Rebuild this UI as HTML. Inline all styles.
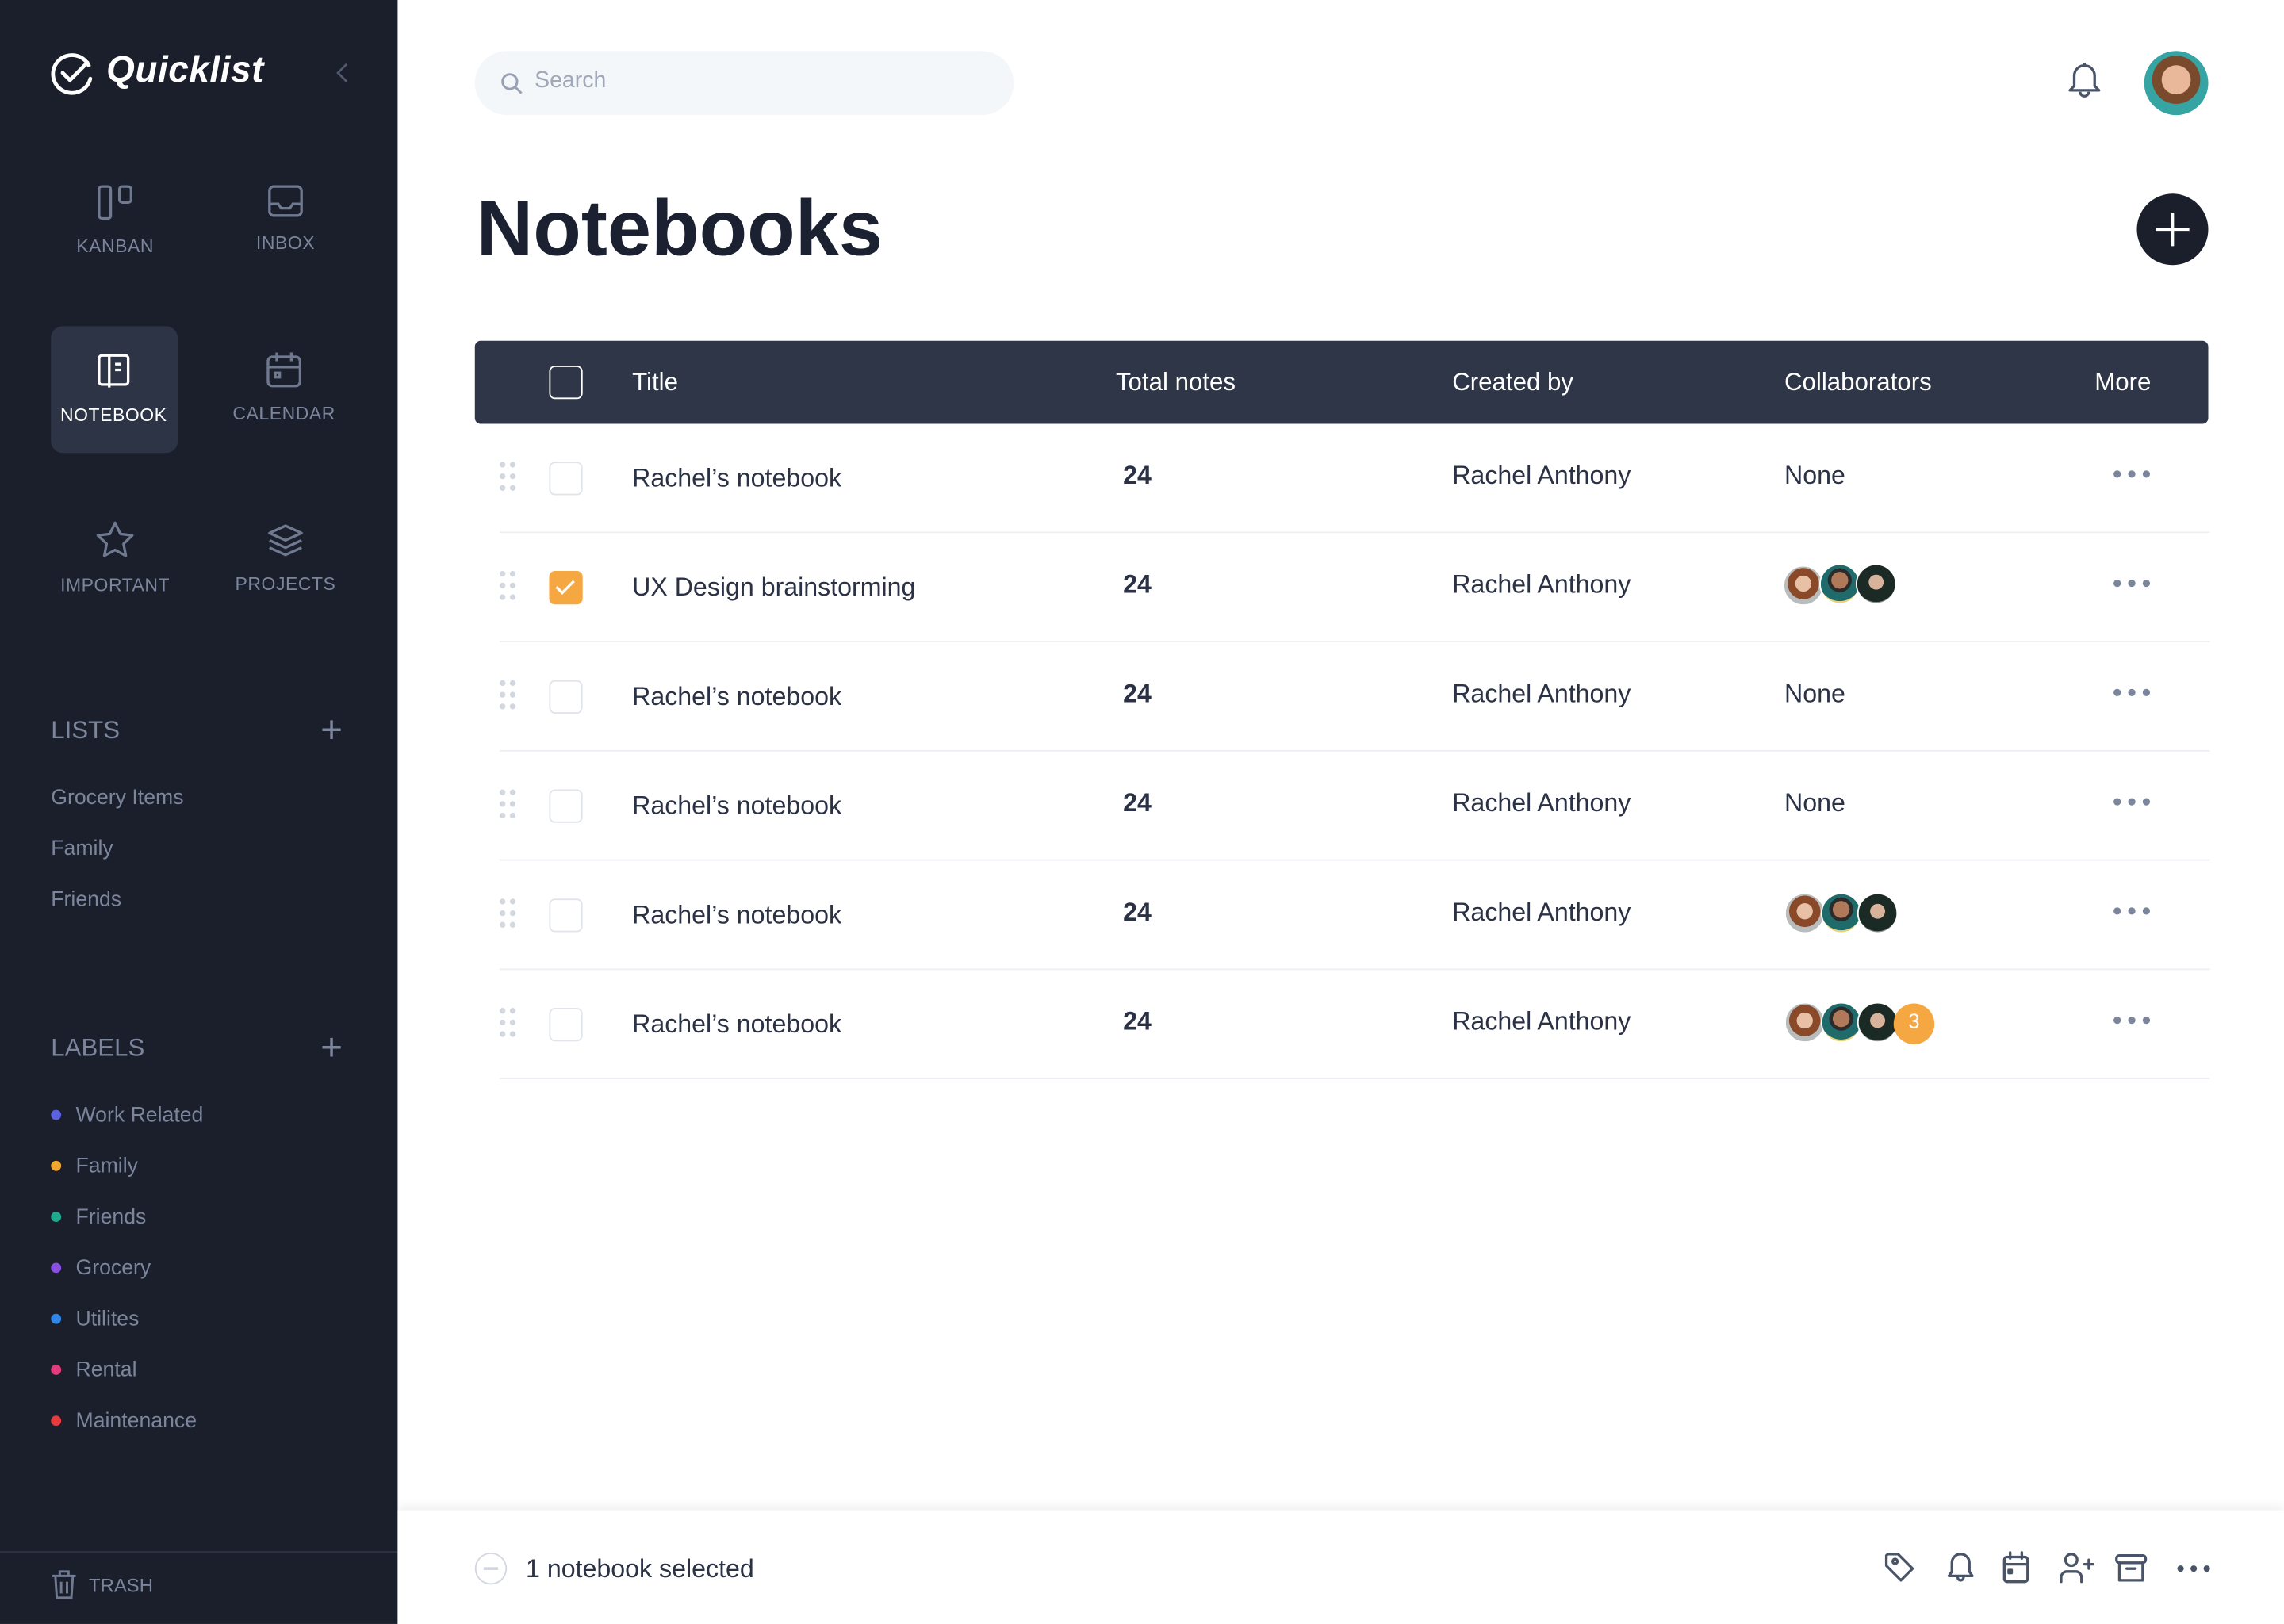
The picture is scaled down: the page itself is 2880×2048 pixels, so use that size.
<!DOCTYPE html>
<html><head><meta charset="utf-8"><style>
*{margin:0;padding:0;box-sizing:border-box}
html,body{width:2880px;height:2048px;overflow:hidden;background:#fff}
#s{width:1568px;height:1115px;transform:scale(1.836735);transform-origin:0 0;position:relative;font-family:"Liberation Sans",sans-serif;color:#2b3245}
.a{position:absolute}
.sb{left:0;top:0;width:273px;height:1115px;background:#1b1f2b}
.nav{color:#7b859c;font-size:12.5px;letter-spacing:.3px;text-align:center;width:88px}
.nav svg{display:block;margin:0 auto 10px}
.lt{color:#7b859c;font-size:14.5px}
.dot{width:7px;height:7px;border-radius:50%;display:inline-block;margin-right:10px;vertical-align:1px}
.th{color:#fff;font-size:17px}
.cb{width:23px;height:23px;border:1.5px solid #e1e5eb;border-radius:4px;background:#fff}
.row{left:343px;width:1174px;height:75px;border-bottom:1.5px solid #eceff3}
.cell{font-size:17.5px;color:#2b3245;top:25px}
.grip{left:0;top:26px;width:14px}
.grip i{display:block;float:left;width:4px;height:4px;border-radius:50%;background:#d3d8e0;margin:0 3px 4px 0}
.dots{left:1108px;top:32px;display:flex;height:5px;line-height:0}
.dots i{display:block;width:5px;height:5px;border-radius:50%;background:#7b859c;margin-right:5px}
.av{position:absolute;width:28px;height:28px;border-radius:50%;border:1.5px solid #fff}
</style></head><body><div id="s">
<div class="a sb"></div>
<svg class="a" style="left:34px;top:34px" width="32" height="32" viewBox="0 0 32 32" fill="none" stroke="#fff" stroke-width="2.6" stroke-linecap="round"><path d="M27 11A13 13 0 1 0 28 20"/><path d="M9 16l5 5 12-12"/></svg>
<div class="a" style="left:73px;top:34px;color:#fff;font-size:25px;font-weight:bold;font-style:italic;letter-spacing:.3px">Quicklist</div>
<svg class="a" style="left:229px;top:42px" width="12" height="16" viewBox="0 0 12 16" fill="none" stroke="#525a6d" stroke-width="1.5"><path d="M9 2L3 8l6 6"/></svg>
<div class="a nav" style="left:35px;top:126px"><svg width="26" height="26" viewBox="0 0 26 26" fill="none" stroke="#6f7a91" stroke-width="1.8"><rect x="2" y="2" width="8" height="22" rx="2"/><rect x="16" y="2" width="8" height="11" rx="2"/></svg>KANBAN</div>
<div class="a nav" style="left:152px;top:126px"><svg width="26" height="24" viewBox="0 0 26 24" fill="none" stroke="#6f7a91" stroke-width="1.8"><rect x="2" y="2" width="22" height="20" rx="3"/><path d="M2 14h6l2 3h6l2-3h6"/></svg>INBOX</div>
<div class="a" style="left:35px;top:224px;width:87px;height:87px;background:#2d3446;border-radius:8px"></div>
<div class="a nav" style="left:34px;top:242px;color:#fff"><svg width="24" height="26" viewBox="0 0 24 26" fill="none" stroke="#fff" stroke-width="1.8"><rect x="2" y="2" width="20" height="20" rx="2"/><path d="M9 2v22M13 8h4M13 12h4"/></svg>NOTEBOOK</div>
<div class="a nav" style="left:151px;top:241px"><svg width="26" height="26" viewBox="0 0 26 26" fill="none" stroke="#6f7a91" stroke-width="1.8"><rect x="2" y="4" width="22" height="20" rx="3"/><path d="M2 11h22M8 1v6M18 1v6"/><rect x="7" y="15" width="3" height="3"/></svg>CALENDAR</div>
<div class="a nav" style="left:35px;top:357px"><svg width="28" height="28" viewBox="0 0 28 28" fill="none" stroke="#6f7a91" stroke-width="1.8" stroke-linejoin="round"><path d="M14 2l3.6 7.6 8.2 1-6 5.8 1.6 8.2L14 20.6l-7.4 4 1.6-8.2-6-5.8 8.2-1z"/></svg>IMPORTANT</div>
<div class="a nav" style="left:152px;top:358px"><svg width="26" height="26" viewBox="0 0 26 26" fill="none" stroke="#6f7a91" stroke-width="1.8" stroke-linejoin="round"><path d="M13 3l11 5-11 5-11-5z"/><path d="M2 13l11 5 11-5M2 18l11 5 11-5"/></svg>PROJECTS</div>
<div class="a" style="left:35px;top:492px;color:#7b859c;font-size:17px">LISTS</div>
<div class="a" style="left:220px;top:486px;color:#7b859c;font-size:26px;font-weight:300">+</div>
<div class="a lt" style="left:35px;top:540px">Grocery Items</div>
<div class="a lt" style="left:35px;top:575px">Family</div>
<div class="a lt" style="left:35px;top:610px">Friends</div>
<div class="a" style="left:35px;top:710px;color:#7b859c;font-size:17px">LABELS</div>
<div class="a" style="left:220px;top:704px;color:#7b859c;font-size:26px;font-weight:300">+</div>
<div class="a lt" style="left:35px;top:758px"><span class="dot" style="background:#5b61e0"></span>Work Related</div>
<div class="a lt" style="left:35px;top:793px"><span class="dot" style="background:#f0a830"></span>Family</div>
<div class="a lt" style="left:35px;top:828px"><span class="dot" style="background:#1fa98f"></span>Friends</div>
<div class="a lt" style="left:35px;top:863px"><span class="dot" style="background:#8a4fe0"></span>Grocery</div>
<div class="a lt" style="left:35px;top:898px"><span class="dot" style="background:#2f86e6"></span>Utilites</div>
<div class="a lt" style="left:35px;top:933px"><span class="dot" style="background:#e23a7a"></span>Rental</div>
<div class="a lt" style="left:35px;top:968px"><span class="dot" style="background:#e53b3b"></span>Maintenance</div>
<div class="a" style="left:0;top:1065px;width:273px;height:1px;background:#2d3343"></div>
<svg class="a" style="left:34px;top:1077px" width="20" height="22" viewBox="0 0 20 22" fill="none" stroke="#6f7a91" stroke-width="1.6"><path d="M2 5h16M7 5V2h6v3M4 5l1 15h10l1-15M8 9v8M12 9v8"/></svg>
<div class="a" style="left:61px;top:1081px;color:#7b859c;font-size:13px">TRASH</div>
<div class="a" style="left:326px;top:35px;width:370px;height:44px;background:#f4f7fa;border-radius:22px"></div>
<svg class="a" style="left:343px;top:49px" width="16" height="16" viewBox="0 0 16 16" fill="none" stroke="#98a1b3" stroke-width="1.6"><circle cx="7" cy="7" r="5"/><path d="M11 11l4 4"/></svg>
<div class="a" style="left:367px;top:47px;color:#a0a8b8;font-size:15.5px">Search</div>
<svg class="a" style="left:1418px;top:42px" width="26" height="28" viewBox="0 0 26 28" fill="none" stroke="#4a5468" stroke-width="1.8" stroke-linejoin="round"><path d="M13 3a7 7 0 0 0-7 7v7l-3 3h20l-3-3v-7a7 7 0 0 0-7-7zM13 1v2M10 21a3 3 0 0 0 6 0"/></svg>
<div class="a" style="left:1472px;top:35px;width:44px;height:44px;border-radius:50%;background:radial-gradient(circle at 50% 45%,#e9b89a 0 30%,#7a4a2c 31% 50%,#36a4a3 51%)"></div>
<div class="a" style="left:327px;top:126px;font-size:54px;font-weight:bold;color:#1b2130">Notebooks</div>
<div class="a" style="left:1467px;top:133px;width:49px;height:49px;border-radius:50%;background:#1b1f2b"></div>
<svg class="a" style="left:1479px;top:145px" width="25" height="25" viewBox="0 0 25 25" stroke="#fff" stroke-width="2"><path d="M12.5 1v23M1 12.5h23"/></svg>
<div class="a" style="left:326px;top:234px;width:1190px;height:57px;background:#2e3648;border-radius:4px"></div>
<div class="a cb" style="left:377px;top:251px;background:transparent;border-color:#fff"></div>
<div class="a th" style="left:434px;top:253px">Title</div>
<div class="a th" style="left:766px;top:253px">Total notes</div>
<div class="a th" style="left:997px;top:253px">Created by</div>
<div class="a th" style="left:1225px;top:253px">Collaborators</div>
<div class="a th" style="left:1438px;top:253px">More</div>
<div class="a row" style="top:291px"><div class="a grip"><i></i><i></i><i></i><i></i><i></i><i></i></div><div class="a cb" style="left:34px;top:26px"></div><div class="a cell" style="left:91px;top:27px">Rachel’s notebook</div><div class="a cell" style="left:428px;font-weight:bold">24</div><div class="a cell" style="left:654px">Rachel Anthony</div><div class="a cell" style="left:882px">None</div><div class="a dots"><i></i><i></i><i></i></div></div>
<div class="a row" style="top:366px"><div class="a grip"><i></i><i></i><i></i><i></i><i></i><i></i></div><div class="a cb" style="left:34px;top:26px;background:#f5a742;border-color:#f5a742"><svg width="20" height="20" viewBox="0 0 20 20" fill="none" stroke="#fff" stroke-width="1.8"><path d="M4 10l4 4 8-8"/></svg></div><div class="a cell" style="left:91px;top:27px">UX Design brainstorming</div><div class="a cell" style="left:428px;font-weight:bold">24</div><div class="a cell" style="left:654px">Rachel Anthony</div>
<div class="av" style="left:881px;top:22px;background:radial-gradient(circle at 50% 45%,#e8c0a5 0 28%,#8a4a2a 29% 55%,#b8bcbc 56%)"></div><div class="av" style="left:906px;top:21px;background:radial-gradient(circle at 50% 40%,#b07a5a 0 28%,#2b2b2b 29% 40%,#1f6b6b 41% 70%,#e8d27a 71%)"></div><div class="av" style="left:931px;top:21px;background:radial-gradient(circle at 50% 45%,#d7b39b 0 26%,#1c2a26 27% 70%,#8a9590 71%)"></div>
<div class="a dots"><i></i><i></i><i></i></div></div>
<div class="a row" style="top:441px"><div class="a grip"><i></i><i></i><i></i><i></i><i></i><i></i></div><div class="a cb" style="left:34px;top:26px"></div><div class="a cell" style="left:91px;top:27px">Rachel’s notebook</div><div class="a cell" style="left:428px;font-weight:bold">24</div><div class="a cell" style="left:654px">Rachel Anthony</div><div class="a cell" style="left:882px">None</div><div class="a dots"><i></i><i></i><i></i></div></div>
<div class="a row" style="top:516px"><div class="a grip"><i></i><i></i><i></i><i></i><i></i><i></i></div><div class="a cb" style="left:34px;top:26px"></div><div class="a cell" style="left:91px;top:27px">Rachel’s notebook</div><div class="a cell" style="left:428px;font-weight:bold">24</div><div class="a cell" style="left:654px">Rachel Anthony</div><div class="a cell" style="left:882px">None</div><div class="a dots"><i></i><i></i><i></i></div></div>
<div class="a row" style="top:591px"><div class="a grip"><i></i><i></i><i></i><i></i><i></i><i></i></div><div class="a cb" style="left:34px;top:26px"></div><div class="a cell" style="left:91px;top:27px">Rachel’s notebook</div><div class="a cell" style="left:428px;font-weight:bold">24</div><div class="a cell" style="left:654px">Rachel Anthony</div>
<div class="av" style="left:882px;top:22px;background:radial-gradient(circle at 50% 45%,#e8c0a5 0 28%,#8a4a2a 29% 55%,#b8bcbc 56%)"></div><div class="av" style="left:907px;top:22px;background:radial-gradient(circle at 50% 40%,#b07a5a 0 28%,#2b2b2b 29% 40%,#1f6b6b 41% 70%,#e8d27a 71%)"></div><div class="av" style="left:932px;top:22px;background:radial-gradient(circle at 50% 45%,#d7b39b 0 26%,#1c2a26 27% 70%,#8a9590 71%)"></div>
<div class="a dots"><i></i><i></i><i></i></div></div>
<div class="a row" style="top:666px"><div class="a grip"><i></i><i></i><i></i><i></i><i></i><i></i></div><div class="a cb" style="left:34px;top:26px"></div><div class="a cell" style="left:91px;top:27px">Rachel’s notebook</div><div class="a cell" style="left:428px;font-weight:bold">24</div><div class="a cell" style="left:654px">Rachel Anthony</div>
<div class="av" style="left:882px;top:22px;background:radial-gradient(circle at 50% 45%,#e8c0a5 0 28%,#8a4a2a 29% 55%,#b8bcbc 56%)"></div><div class="av" style="left:907px;top:22px;background:radial-gradient(circle at 50% 40%,#b07a5a 0 28%,#2b2b2b 29% 40%,#1f6b6b 41% 70%,#e8d27a 71%)"></div><div class="av" style="left:932px;top:22px;background:radial-gradient(circle at 50% 45%,#d7b39b 0 26%,#1c2a26 27% 70%,#8a9590 71%)"></div><div class="av" style="left:957px;top:23px;background:#f5a742;color:#fff;font-size:14px;text-align:center;line-height:25px;border:none">3</div>
<div class="a dots"><i></i><i></i><i></i></div></div>
<div class="a" style="left:273px;top:1037px;width:1295px;height:78px;background:#fff;box-shadow:0 -3px 6px rgba(0,0,0,.06)"></div>
<div class="a" style="left:326px;top:1066px;width:22px;height:22px;border-radius:50%;border:1.5px solid #d3d8e0"></div>
<div class="a" style="left:332px;top:1076px;width:10px;height:1.5px;background:#d3d8e0"></div>
<div class="a" style="left:361px;top:1067px;font-size:17.5px;color:#2b3245">1 notebook selected</div>
<svg class="a" style="left:1293px;top:1063px" width="230" height="28" viewBox="0 0 230 28" fill="none" stroke="#4a5468" stroke-width="1.8" stroke-linejoin="round" stroke-linecap="round">
<path d="M3 4h7l10 10-8 8L2 12V5z"/><circle cx="8" cy="9" r="1.6"/>
<path d="M53 4a6 6 0 0 0-6 6v6l-2 3h16l-2-3v-6a6 6 0 0 0-6-6zM51 20a2 2 0 0 0 4 0"/>
<rect x="83" y="6" width="16" height="17" rx="2"/><path d="M83 11h16M87 3v4M95 3v4"/><rect x="86" y="15" width="2" height="2"/>
<circle cx="129" cy="8" r="4"/><path d="M122 23v-3a4 4 0 0 1 4-4h6a4 4 0 0 1 4 4v3M138 11h6M141 8v6"/>
<rect x="160" y="5" width="20" height="5" rx="2"/><path d="M162 10v12h16V10M167 14h6"/>
<circle cx="204" cy="14" r="2.2" fill="#4a5468" stroke="none"/><circle cx="213" cy="14" r="2.2" fill="#4a5468" stroke="none"/><circle cx="222" cy="14" r="2.2" fill="#4a5468" stroke="none"/>
</svg>
</div></body></html>
